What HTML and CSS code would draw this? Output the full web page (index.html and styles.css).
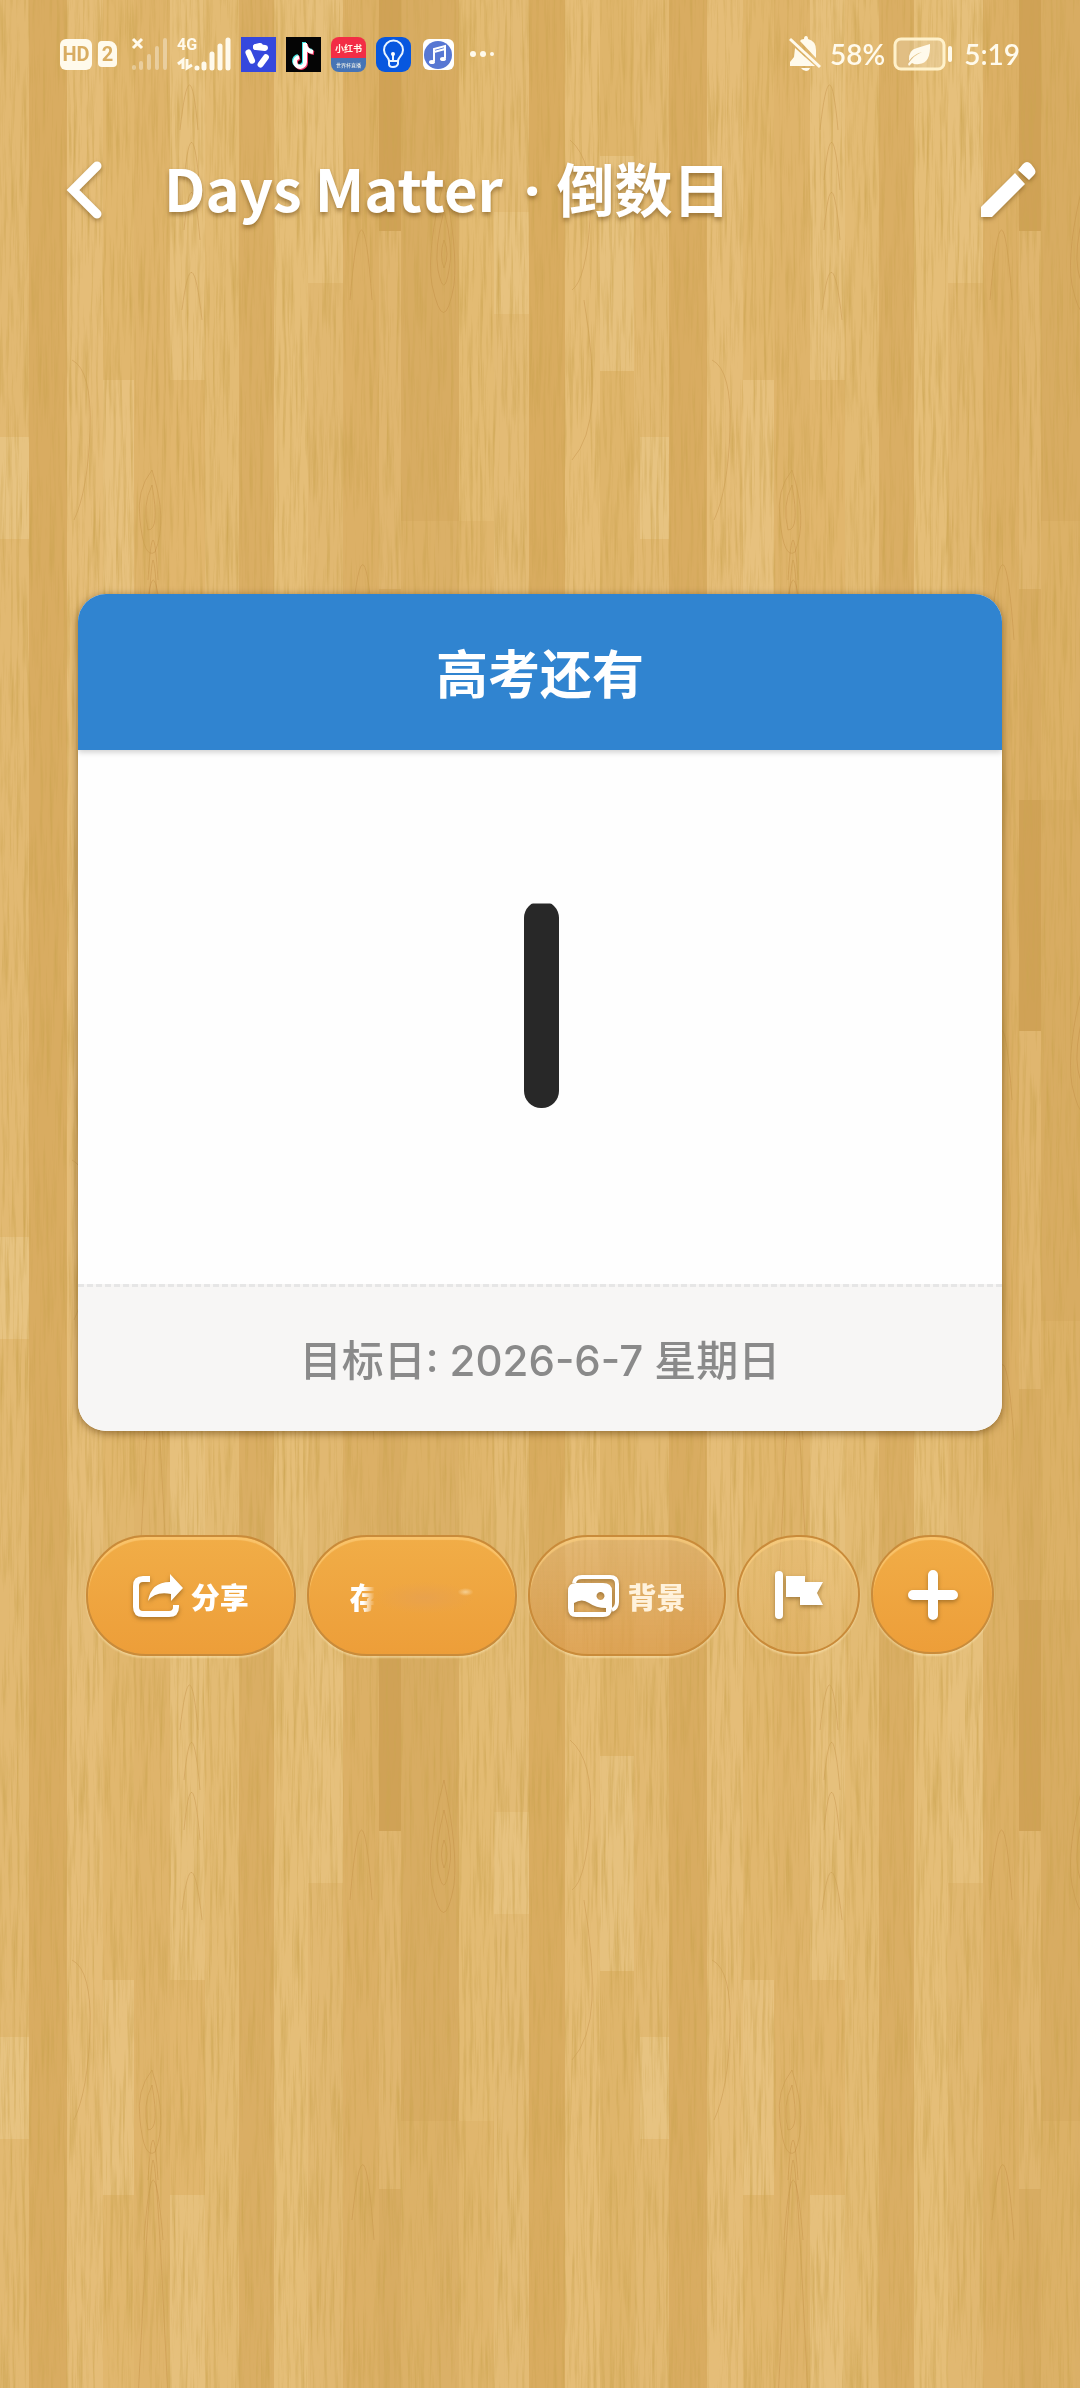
FILE: index.html
```
<!DOCTYPE html>
<html lang="zh-CN">
<head>
    <meta charset="UTF-8">
    <meta name="viewport" content="width=device-width, initial-scale=1.0">
    <title>Days Matter · 倒数日</title>
    <link rel="stylesheet" href="styles.css">
</head>
<body>
    <!-- wood background -->
    <svg class="wood" aria-hidden="true">
        <defs>
            <pattern id="planks" width="640" height="800" patternUnits="userSpaceOnUse">
                <rect width="640" height="800" fill="#e2b972"/>
                <rect x="29" width="38" height="800" fill="#d9ac61"/>
                <rect x="67" width="36" height="800" fill="#e5bd78"/>
                <rect x="103" width="31" height="800" fill="#e1b76e"/>
                <rect x="134" width="36" height="800" fill="#dfb46b"/>
                <rect x="170" width="35" height="800" fill="#e6c07c"/>
                <rect x="205" width="34" height="800" fill="#e3bb74"/>
                <rect x="239" width="35" height="800" fill="#daae64"/>
                <rect x="274" width="34" height="800" fill="#e5be78"/>
                <rect x="308" width="35" height="800" fill="#e1b871"/>
                <rect x="343" width="36" height="800" fill="#dcb066"/>
                <rect x="379" width="22" height="800" fill="#d8ac62"/>
                <rect x="401" width="34" height="800" fill="#dcb167"/>
                <rect x="435" width="24" height="800" fill="#dbb067"/>
                <rect x="459" width="35" height="800" fill="#e0b66d"/>
                <rect x="494" width="35" height="800" fill="#e3bb75"/>
                <rect x="529" width="36" height="800" fill="#d9ac60"/>
                <rect x="565" width="35" height="800" fill="#e5bd77"/>
                <rect x="600" width="34" height="800" fill="#dfb56b"/>
                <rect x="103" y="380" width="31" height="215" fill="#e7c17e"/>
                <rect x="170" y="380" width="35" height="215" fill="#e1b66d"/>
                <rect x="308" y="0" width="35" height="283" fill="#e6c07c"/>
                <rect x="379" y="0" width="22" height="231" fill="#d0a256"/>
                <rect x="379" y="231" width="22" height="358" fill="#e0b66f"/>
                <rect x="401" y="0" width="58" height="521" fill="#d8ac62"/>
                <rect x="459" y="0" width="35" height="521" fill="#e3bb73"/>
                <rect x="494" y="212" width="35" height="102" fill="#e7c27f"/>
                <rect x="600" y="156" width="34" height="215" fill="#e6c17e"/>
                <rect y="437" width="29" height="102" fill="#e7c381"/>
                <g fill="none" stroke="#b98238" stroke-opacity=".35">
                    <path d="M138 800Q150 560 153 560Q157 560 168 800M144 640Q153 520 163 640M148 580Q153 500 158 580"/>
                    <path d="M152 470Q136 490 140 520Q144 560 155 552Q168 520 152 470M152 485Q142 505 148 530Q160 530 152 485"/>
                    <path d="M444 210Q434 250 438 270Q444 300 449 270Q454 250 444 210M444 180Q426 250 432 285Q444 340 454 285Q458 250 444 180M444 240q-5 15 0 28q6-14 0-28"/>
                    <path d="M180 130Q190 40 198 130M184 180Q192 100 200 190M184 230Q192 150 200 240M182 310Q192 230 202 320"/>
                    <path d="M570 140Q594 160 590 220T572 290M572 460Q590 440 592 400T584 300"/>
                    <path d="M72 360Q92 370 90 430T74 520M350 300Q362 160 372 300M352 620Q364 500 374 640"/>
                </g>
            </pattern>
            <filter id="grain" x="0" y="0" width="100%" height="100%">
                <feTurbulence type="fractalNoise" baseFrequency=".3 .012" numOctaves="4" seed="8"/>
                <feColorMatrix values="0 0 0 0 .6  0 0 0 0 .37  0 0 0 0 .08  1.6 0 0 0 -.72"/>
            </filter>
        </defs>
        <rect width="100%" height="100%" fill="url(#planks)"/>
        <rect width="100%" height="100%" filter="url(#grain)"/>
    </svg>

    <div class="status-bar">
        <div class="status-left">
            <span class="badge">HD</span>
            <span class="badge sim">2</span>
            <svg class="signal" width="36" height="35" viewBox="0 0 36 35">
                <path d="M2 2l9 9M11 2l-9 9" stroke="#fffaec" stroke-width="3"/>
                <path d="M3 30v1M10 26v5M18 19v12M26 11v20M34 3v28" stroke="#fff" stroke-opacity=".35" stroke-width="4" stroke-linecap="round"/>
            </svg>
            <span class="network">4G
                <svg width="54" height="35" viewBox="0 0 54 35">
                    <path d="M1 27l5-4v9M10 22v9l5-3" stroke="#fffaec" stroke-width="3" fill="none"/>
                    <path d="M20 31v0M27 27v4M35 17v14M43 9v22M51 3v28" stroke="#fffaec" stroke-width="5" stroke-linecap="round"/>
                </svg>
            </span>
            <svg class="app" viewBox="0 0 35 35">
                <rect width="35" height="35" fill="#3548dd"/>
                <g stroke="#fff" stroke-width="6" stroke-linecap="round">
                    <path id="blade" d="M15 10L24 11"/>
                    <path d="M15 10L19 9"/>
                    <use href="#blade" transform="rotate(120 17 18)"/>
                    <use href="#blade" transform="rotate(240 17 18)"/>
                </g>
            </svg>
            <svg class="app" viewBox="0 0 35 35">
                <rect width="35" height="35" fill="#050505"/>
                <g fill="none" stroke-width="4">
                    <path d="M18 5v19a5 5 0 1 1-6-5M18 6q1 7 8 8" stroke="#46e5e2"/>
                    <path d="M20 7v19a5 5 0 1 1-6-5M20 8q1 7 8 8" stroke="#f43b66"/>
                    <path d="M19 6v19a5 5 0 1 1-6-5M19 7q1 7 8 8" stroke="#fff"/>
                </g>
            </svg>
            <span class="app redbook"><b>小红书</b><small>世界杯直播</small></span>
            <svg class="app" viewBox="0 0 35 35">
                <rect width="35" height="35" rx="9" fill="#0757df"/>
                <path d="M13 24c0-4-5-5-5-11a9 9 0 0 1 19 0c0 6-5 7-5 11zM13 24v3q0 3 4 3t5-3v-3M17 24v-7" fill="none" stroke="#e9f4ff" stroke-width="2"/>
                <circle cx="17" cy="17" r="2" fill="#fff"/>
            </svg>
            <svg class="app" viewBox="0 0 35 35">
                <rect x="2" y="2" width="31" height="31" rx="6" fill="#fff"/>
                <circle cx="17" cy="18" r="14" fill="#5777d3"/>
                <path d="M13 24V12l11-3v12M13 15l11-3" fill="none" stroke="#fff" stroke-width="2"/>
                <ellipse cx="11" cy="25" rx="3" ry="2" fill="#fff"/><ellipse cx="22" cy="22" rx="3" ry="2" fill="#fff"/>
            </svg>
            <svg class="more" width="26" height="6" viewBox="0 0 26 6">
                <g fill="#fffaec"><circle cx="3" cy="3" r="3"/><circle cx="13" cy="3" r="3"/><circle cx="22" cy="3" r="2"/></g>
            </svg>
        </div>
        <div class="status-right">
            <svg width="33" height="36" viewBox="0 0 33 36">
                <path d="M11 5q1-2 4-2q0-3 2-3t2 3q8 2 8 11v8zM6 12l20 18H1v-4l4-5z" fill="#fffaec"/>
                <path d="M1 3l30 28" stroke="#fffaec" stroke-width="3"/>
                <path d="M12 32h9q-1 3-4 3t-5-3" fill="#fffaec"/>
            </svg>
            <span class="percent">58%</span>
            <svg width="59" height="34" viewBox="0 0 59 34">
                <rect x="2" y="2" width="49" height="30" rx="6" fill="#fff" fill-opacity=".2" stroke="#fff1ca" stroke-width="3"/>
                <path d="M16 24Q15 13 24 11L37 7Q38 26 26 27Q22 28 19 26L16 29L15 27Q21 18 29 15Q21 17 16 24" fill="#fffaec"/>
                <path d="M57 11v12" stroke="#fffaec" stroke-width="4" stroke-linecap="round"/>
            </svg>
            <span class="time">5:19</span>
        </div>
    </div>

    <header>
        <button class="icon-btn" aria-label="返回">
            <svg width="36" height="60" viewBox="0 0 36 60"><path d="M31 6L7 30L31 54" fill="none" stroke="#fff" stroke-width="9" stroke-linecap="round"/></svg>
        </button>
        <h1>Days Matter <span class="dot">·</span> 倒数日</h1>
        <button class="icon-btn" aria-label="编辑">
            <svg width="56" height="56" viewBox="0 0 56 56"><path d="M1 45L35 11L45 22L12 55H1zM38 8l5-6q4-4 8 0l3 4q3 4 0 7l-5 5z" fill="#fff"/></svg>
        </button>
    </header>

    <main>
        <section class="card">
            <h2>高考还有</h2>
            <div class="days"><span>1</span></div>
            <p class="target">目标日: 2026-6-7 星期日</p>
        </section>

        <div class="actions">
            <button class="pill">
                <svg width="50" height="44" viewBox="0 0 50 44">
                    <path d="M17 5H10Q3 5 3 12V33Q3 40 10 40H36Q43 40 43 33V31" fill="none" stroke="#fff" stroke-width="6"/>
                    <path d="M37 0L50 14L38 27V20Q22 17 15 27Q18 8 37 8z" fill="#fff"/>
                </svg>
                <span>分享</span>
            </button>
            <button class="pill smudged"><span>存</span></button>
            <button class="pill clear photo">
                <svg width="51" height="42" viewBox="0 0 51 42">
                    <path d="M6 8Q7 2 14 2H42Q49 2 49 9V27Q49 33 44 35" fill="none" stroke="#fff" stroke-width="4"/>
                    <path fill-rule="evenodd" d="M8 8H35Q44 8 44 16V33Q44 42 35 42H8Q0 42 0 33V16Q0 8 8 8M6 28Q14 23 21 28T38 33V37H6zM32 17a4 4 0 1 0 1 0" fill="#fff"/>
                </svg>
                <span>背景</span>
            </button>
            <button class="round clear" aria-label="标记">
                <svg width="48" height="50" viewBox="0 0 48 50"><path d="M4 5V45" stroke="#fff" stroke-width="8" stroke-linecap="round"/><path d="M11 6H30V12H48L42 23L48 35H25V27H11z" fill="#fff"/></svg>
            </button>
            <button class="round" aria-label="添加">
                <svg width="50" height="50" viewBox="0 0 50 50"><path d="M25 5V45M5 25H45" stroke="#fff" stroke-width="10" stroke-linecap="round"/></svg>
            </button>
        </div>
    </main>
</body>
</html>
```
FILE: styles.css
```
* {
    box-sizing: border-box;
}

body {
    margin: 0;
    min-height: 100vh;
    background-color: #deb46b;
    font-family: "Noto Sans CJK SC", sans-serif;
    color: #fff;
}

.wood {
    position: fixed;
    z-index: -1;
    width: 100%;
    height: 100%;
}

svg {
    display: block;
    flex-shrink: 0;
}

button {
    padding: 0;
    color: #fff;
    font-family: inherit;
    cursor: pointer;
}

.status-bar {
    display: flex;
    justify-content: space-between;
    height: 108px;
    padding: 0 60px;
    color: #fffaec;
}

.status-left,
.status-right {
    display: flex;
    align-items: center;
    gap: 10px;
}

.badge {
    width: 32px;
    margin-right: -4px;
    border-radius: 6px;
    background: #fffaec;
    color: #d9ad62;
    font: bold 20px/31px Roboto, sans-serif;
    text-align: center;
}

.sim {
    width: 19px;
    margin-right: 4px;
    line-height: 26px;
    border-radius: 4px 8px 4px 4px;
}

.network {
    display: block;
    position: relative;
    width: 54px;
    height: 35px;
    font: bold 16px/16px Roboto, sans-serif;
}

.network svg {
    position: absolute;
    top: 0;
    left: 0;
}

.app {
    width: 35px;
    height: 35px;
}

.redbook {
    display: flex;
    flex-direction: column;
    align-items: center;
    overflow: hidden;
    border-radius: 8px;
    background: linear-gradient(#f32d45 60%, #4774b5 60%);
    white-space: nowrap;
}

.redbook b {
    font-size: 9px;
    line-height: 23px;
}

.redbook small {
    font-size: 5px;
    line-height: 10px;
}

.more {
    margin-left: 4px;
}

.status-right {
    gap: 8px;
}

.percent,
.time {
    font: 600 28px/36px Lato, sans-serif;
}

.time {
    margin-left: 4px;
}

header {
    display: flex;
    align-items: center;
    height: 164px;
    padding: 0 44px 0 66px;
}

h1 {
    flex: 1;
    margin: 0 0 0 62px;
    padding-bottom: 4px;
    font-size: 58px;
    line-height: 80px;
    font-weight: bold;
    text-shadow: 0 3px 4px rgba(100, 65, 15, 0.5);
}

.dot {
    margin: 0 3px 0 8px;
    font-family: "Noto Sans", sans-serif;
}

.icon-btn {
    border: none;
    background: none;
}

.icon-btn svg,
.actions svg {
    filter: drop-shadow(0 2px 2px rgba(100, 65, 15, 0.5));
}

main {
    padding: 322px 78px 0;
}

.card {
    overflow: hidden;
    border-radius: 28px;
    background: #fefefe;
    box-shadow: 0 2px 8px rgba(90, 55, 10, 0.6);
    text-align: center;
}

.card h2 {
    margin: 0;
    padding: 40px 0;
    background: #3084d0;
    box-shadow: 0 2px 6px rgba(0, 0, 0, 0.2);
    font-size: 52px;
    line-height: 76px;
    font-weight: 700;
}

.days {
    padding: 74px 26px 110px 0;
    color: #282828;
    font: 700 292px/350px "Open Sans", sans-serif;
}

/* show only the rounded stem of the digit */
.days span {
    display: block;
    width: 168px;
    margin: 0 auto;
    clip-path: inset(77px 52px 66px 81px round 17px);
}

.target {
    margin: 0;
    padding: 46px 0 42px;
    border-top: 3px dashed #e6e6e6;
    background: #f7f6f5;
    color: #8a8a8a;
    font-family: Inter, "Noto Sans CJK SC", sans-serif;
    font-size: 42px;
    line-height: 56px;
    font-weight: 500;
}

.actions {
    display: flex;
    gap: 11px;
    margin-top: 104px;
    padding: 0 8px;
}

.pill,
.round {
    display: flex;
    flex: 1 1 210px;
    align-items: center;
    justify-content: center;
    gap: 8px;
    height: 121px;
    border: 2px solid #c98b3a;
    border-radius: 60px;
    background: linear-gradient(#f1ad47, #ed9e39);
    box-shadow: inset 0 3px 1px rgba(255, 210, 130, 0.6), 0 2px 2px rgba(255, 235, 185, 0.5);
    font-size: 29px;
    line-height: 40px;
    font-weight: 900;
}

.round {
    flex-basis: 123px;
    height: 119px;
}

.clear {
    background: linear-gradient(rgba(240, 200, 130, 0.4), rgba(225, 175, 95, 0.4));
}

.photo {
    flex-basis: 199px;
    background: linear-gradient(rgba(225, 180, 115, 0.6), rgba(220, 155, 75, 0.7));
}

.photo span {
    color: #fff2dc;
}

/* label fades out into the button */
.smudged {
    justify-content: flex-start;
    background: radial-gradient(ellipse 8px 4px at 76% 47%, #f6cf92, transparent),
        radial-gradient(ellipse 50px 16px at 56% 52%, #e9a24c, transparent),
        linear-gradient(#f1ad47, #ed9e39);
}

.smudged span {
    margin-left: 41px;
    -webkit-mask-image: linear-gradient(90deg, #000 45%, transparent 85%);
    mask-image: linear-gradient(90deg, #000 45%, transparent 85%);
}
```
